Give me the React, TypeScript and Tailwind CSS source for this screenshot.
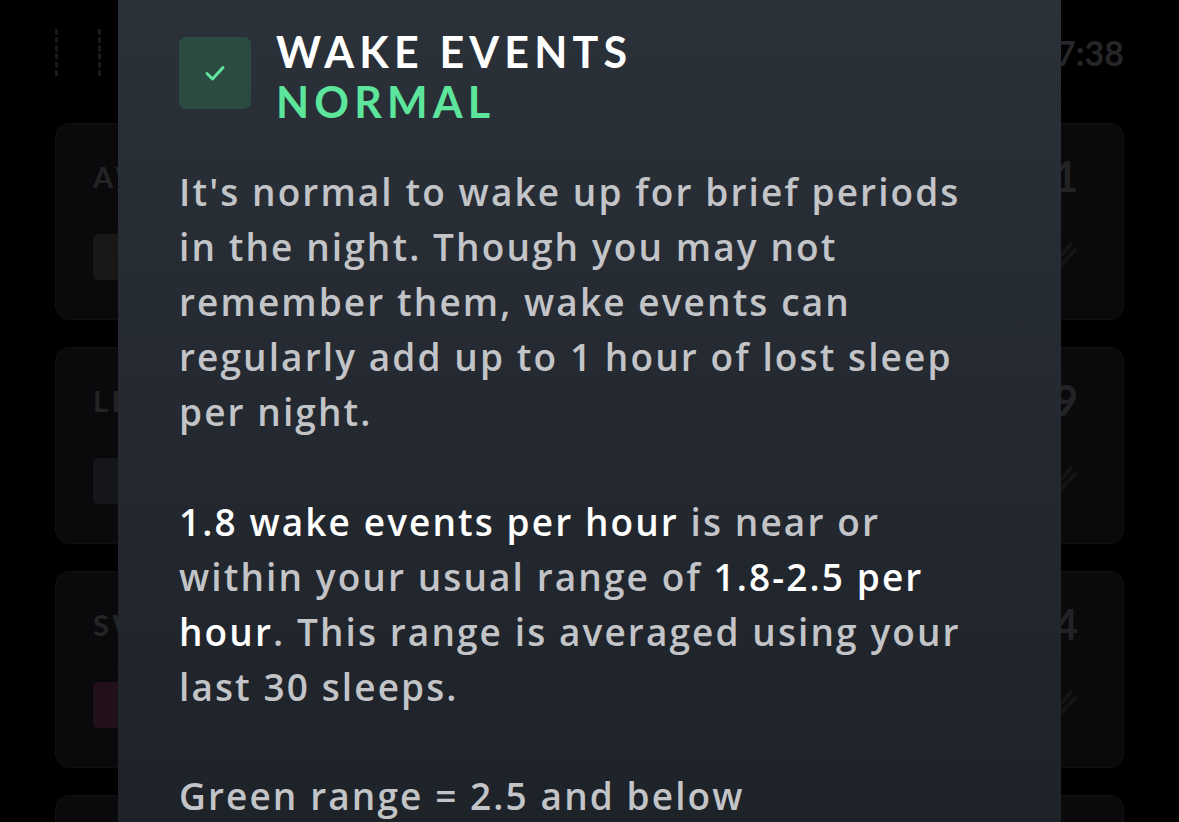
import React from "react";

const font = { fontFamily: "Lato, 'Noto Sans', sans-serif" };
const bodyFont = { fontFamily: "'Open Sans', 'Noto Sans', sans-serif" };

function BgCard({ label, num, bar }: { label: string; num: string; bar: string }) {
  return (
    <div className="h-[197px] rounded-[14px] bg-[#0a0a0c] border border-[#111114] flex justify-between pl-[37px] pr-[45px] pt-[31px]">
      <div className="flex flex-col gap-[35px]">
        <div className="text-[29px] font-bold tracking-[0.12em] text-[#242426]">{label}</div>
        <div className={`w-[220px] h-[46px] rounded-[6px] ${bar}`} />
      </div>
      <div className="flex flex-col items-end gap-[34px]">
        <div className="text-[42px] font-bold text-[#232325] leading-none">{num}</div>
        <svg width="40" height="50" viewBox="0 0 40 50">
          <path d="M4 46 L34 12 M10 48 L38 18" stroke="#141416" strokeWidth="4" />
        </svg>
      </div>
    </div>
  );
}

export default function App() {
  return (
    <div className="relative w-[1179px] h-[822px] bg-black overflow-hidden" style={font}>
      {/* background screen */}
      <div className="flex flex-col px-[55px] pt-[28px]">
        <div className="flex justify-between items-center h-[48px]">
          <div className="w-[46px] h-[47px] border-x-[3px] border-dashed border-[#1a1a1c]" />
          <div className="text-[34px] font-bold text-[#262628]">7:38</div>
        </div>
        <div className="flex flex-col gap-[27px] mt-[47px]">
          <BgCard label="AWAKE" num="1" bar="bg-[#1a1816]" />
          <BgCard label="LIGHT" num="9" bar="bg-[#15161a]" />
          <BgCard label="SWS (DEEP)" num="4" bar="bg-[#210f19]" />
          <BgCard label="REM" num="2" bar="bg-[#0f1418]" />
        </div>
      </div>

      {/* modal overlay */}
      <div className="absolute top-0 bottom-0 left-[118px] w-[943px] bg-gradient-to-b from-[#2b3139] to-[#1e2229] pl-[61px] pr-[20px] pt-[37px]">
        <div className="flex items-start gap-[25px]">
          <div className="w-[72px] h-[72px] rounded-[7px] bg-[#2b4a41] flex items-center justify-center">
            <svg width="22" height="18" viewBox="0 0 22 18">
              <path d="M3 9.5 L8.5 15 L19 3.5" fill="none" stroke="#5ee59c" strokeWidth="3" strokeLinecap="round" strokeLinejoin="round" />
            </svg>
          </div>
          <div className="flex flex-col -mt-[10px]">
            <div className="text-[43px] leading-[50px] font-bold tracking-[0.12em] text-white">WAKE EVENTS</div>
            <div className="text-[43px] leading-[50px] font-bold tracking-[0.12em] text-[#5ee59c]">NORMAL</div>
          </div>
        </div>

        <div className="mt-[37px] text-[37px] leading-[55px] font-semibold tracking-[2.1px] text-[#c2c4c7] whitespace-nowrap" style={bodyFont}>
          <p>
            It's normal to wake up for brief periods<br />
            in the night. Though you may not<br />
            remember them, wake events can<br />
            regularly add up to 1 hour of lost sleep<br />
            per night.
          </p>
          <p className="mt-[55px]">
            <span className="text-white">1.8 wake events per hour</span> is near or<br />
            within your usual range of <span className="text-white">1.8-2.5 per</span><br />
            <span className="text-white">hour</span>. This range is averaged using your<br />
            last 30 sleeps.
          </p>
          <p className="mt-[54px]">Green range = 2.5 and below</p>
        </div>
      </div>
    </div>
  );
}
